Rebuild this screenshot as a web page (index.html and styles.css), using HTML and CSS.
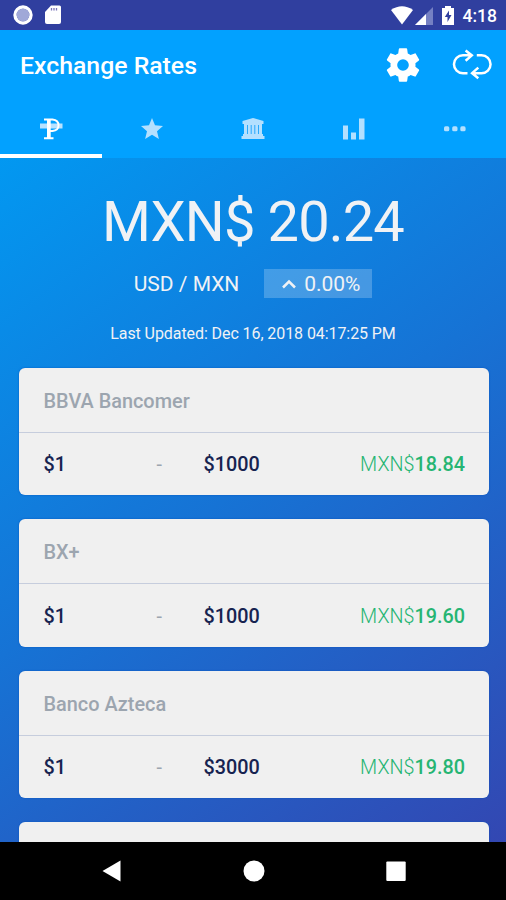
FILE: index.html
```html
<!DOCTYPE html>
<html lang="en">
<head>
<meta charset="utf-8">
<title>Exchange Rates</title>
<link rel="stylesheet" href="styles.css">
</head>
<body>
<div class="status">
  <svg class="status-sync" width="20" height="20" viewBox="0 0 20 20"><circle cx="10" cy="10" r="8" fill="none" stroke="#fff" stroke-width="3.400"/><circle cx="10" cy="10" r="6.400" fill="#a0a8d8"/></svg>
  <svg class="status-card" width="16" height="20" viewBox="0 0 16 20"><path d="M6 .5h8.500q1.500 0 1.500 1.500v15q0 2-2 2H2q-2 0-2-2V7z" fill="#fff"/><path d="M6.500 3v2.500M9 3v2.500M11.500 3v2.500" stroke="#7b75b8" stroke-width="1.300"/></svg>
  <span class="spacer"></span>
  <svg class="wifi" width="24" height="19" viewBox="0 0 24 19"><path d="M1 4Q12-3.500 23 4L12 18.500z" fill="#fff"/></svg>
  <svg class="signal" width="18" height="18" viewBox="0 0 18 18"><path d="M18 0v18H0z" fill="#7580c3"/><path d="M11 7v11H0z" fill="#fff"/></svg>
  <svg class="battery" width="12" height="19" viewBox="0 0 12 19"><path d="M3 0h6v2h3v17H0V2h3z" fill="#fff"/><path d="M7 4.500L2.800 11h2.700v5l4-7H7z" fill="#303f9f"/></svg>
  <span class="clock">4:18</span>
</div>
<header class="header">
  <div class="toolbar">
    <h1>Exchange Rates</h1>
    <svg class="gear" width="40" height="40" viewBox="0 0 24 24"><path fill="#fff" d="M19.430 12.980c.040-.320.070-.640.070-.980s-.030-.660-.070-.980l2.110-1.650c.190-.150.240-.420.120-.640l-2-3.460c-.120-.220-.390-.300-.610-.220l-2.490 1c-.520-.400-1.080-.730-1.690-.980l-.380-2.650C14.460 2.180 14.250 2 14 2h-4c-.250 0-.460.180-.490.420l-.380 2.650c-.610.250-1.170.590-1.690.980l-2.490-1c-.230-.090-.490 0-.610.220l-2 3.460c-.130.220-.070.490.120.640l2.110 1.650c-.040.320-.070.650-.070.980s.030.660.070.980l-2.110 1.650c-.190.150-.240.420-.120.640l2 3.460c.120.220.390.300.610.220l2.490-1c.520.400 1.080.730 1.690.980l.380 2.650c.030.240.240.420.490.420h4c.250 0 .460-.180.490-.420l.380-2.650c.610-.250 1.170-.590 1.690-.980l2.490 1c.230.090.490 0 .610-.220l2-3.460c.120-.220.070-.490-.120-.640zM12 15.500A3.500 3.500 0 1 1 12 8.500a3.500 3.500 0 0 1 0 7z"/></svg>
    <svg class="swap" width="40" height="32" viewBox="0 0 40 32" fill="none" stroke="#fff" stroke-width="2.500"><path d="M15.500 24.300H11a9 9 0 0 1 0-18.100h9.500M13.600 1.500l6.200 4.900-6.200 5.300M24.800 6.200h4.700a9 9 0 0 1 0 18.100H20M26.300 18.600l-6.200 5.500 6.200 5.200"/></svg>
  </div>
  <nav class="tabs">
    <span class="tab active"><svg width="26" height="26" viewBox="0 0 26 26"><path d="M2 7.500h22.500v5H2z" fill="#b8e2ff"/><path d="M6 3.500h8.500q6 .5 6 5.800t-6 5.700h-2.500M6 22.300h9.500" fill="none" stroke="#fff" stroke-width="1.900"/><path d="M9 3.500h3.700v19H9z" fill="#fff"/></svg></span>
    <span class="tab"><svg width="26" height="26" viewBox="0 0 26 26"><path d="M13 2l3 7.300 8 .7-6 5.200 1.900 7.800-6.900-4.200L6.100 23 8 15.200 2 10l8-.7z" fill="#b3e0ff"/></svg></span>
    <span class="tab"><svg width="26" height="26" viewBox="0 0 26 26" fill="#b3e0ff"><path d="M13 2L2.500 5v3h21V5zM4 8h18v10H4zM3 18h20v2H3zM1.500 20h23v3h-23z"/><path d="M7.500 9v9M11.200 9v9M14.800 9v9M18.500 9v9" stroke="#2aa9fc" stroke-width="1"/></svg></span>
    <span class="tab"><svg width="26" height="26" viewBox="0 0 26 26"><path d="M2 9.500h5v14H2zM10 16.500h5v7h-5zM18 2.500h5.500v21H18z" fill="#b3e0ff"/></svg></span>
    <span class="tab"><svg width="26" height="26" viewBox="0 0 26 26" fill="#b3e0ff"><rect x="2" y="10.300" width="5.300" height="5" rx="1.600"/><rect x="10.200" y="10.300" width="5.300" height="5" rx="1.600"/><rect x="18.300" y="10.300" width="5.300" height="5" rx="1.600"/></svg></span>
  </nav>
</header>
<main class="content">
  <div class="rate">MXN$ 20.24</div>
  <div class="pair"><span class="pair-name">USD / MXN</span><span class="change"><svg width="16" height="12" viewBox="0 0 16 12"><path d="M2 9.500l6-6 6 6" fill="none" stroke="#f0f2f5" stroke-width="2.500"/></svg>0.00%</span></div>
  <div class="updated">Last Updated: Dec 16, 2018 04:17:25 PM</div>
  <section class="cards">
    <article class="card"><h2>BBVA Bancomer</h2><div class="row"><b>$1</b><i>-</i><b>$1000</b><span class="price">MXN$<strong>18.84</strong></span></div></article>
    <article class="card"><h2>BX+</h2><div class="row"><b>$1</b><i>-</i><b>$1000</b><span class="price">MXN$<strong>19.60</strong></span></div></article>
    <article class="card"><h2>Banco Azteca</h2><div class="row"><b>$1</b><i>-</i><b>$3000</b><span class="price">MXN$<strong>19.80</strong></span></div></article>
    <article class="card"><h2></h2></article>
  </section>
</main>
<footer class="navbar">
  <svg width="22" height="22" viewBox="0 0 22 22"><path d="M1.500 11L19.500.5v21z" fill="#fff"/></svg>
  <svg width="22" height="22" viewBox="0 0 22 22"><circle cx="11" cy="11" r="10.500" fill="#fff"/></svg>
  <svg width="22" height="22" viewBox="0 0 22 22"><rect x="1.300" y="1.500" width="19.400" height="19.500" rx="1" fill="#fff"/></svg>
</footer>
</body>
</html>
```
FILE: styles.css
```css
* { box-sizing: border-box; }
body {
  margin: 0;
  height: 900px;
  display: flex;
  flex-direction: column;
  overflow: hidden;
  font-family: Roboto, "Liberation Sans", sans-serif;
  background: #000;
}
svg { display: block; flex: none; }
.status {
  flex: none;
  height: 30px;
  display: flex;
  align-items: center;
  padding: 0 9px 0 13px;
  background: #303f9f;
  color: #fff;
}
.status-card { margin-left: 12px; }
.spacer { flex: 1; }
.signal { margin: 2px 9px 0 1px; }
.clock { margin: 2px 0 0 9px; font-size: 17.500px; font-weight: 500; line-height: 20px; }
.header {
  flex: none;
  height: 128px;
  background: #02a1ff;
}
.toolbar {
  height: 70px;
  display: flex;
  align-items: center;
  padding: 0 14.500px 0 20px;
}
h1 {
  flex: 1;
  margin: 2px 0 0;
  color: #fff;
  font-size: 24.800px;
  font-weight: 500;
  line-height: 30px;
}
.gear { margin-top: -1px; }
.swap { margin-left: 29px; }
.tabs {
  height: 58px;
  display: grid;
  grid-template-columns: 102px repeat(4, 1fr);
}
.tab {
  display: flex;
  justify-content: center;
  padding: 16px 1px 0 0;
  border-bottom: 4px solid transparent;
}
.active { border-color: #fff; }
.content {
  flex: none;
  height: 684px;
  overflow: hidden;
  background: linear-gradient(145deg, #0298f1 0%, #1673d5 48%, #3347b2 100%);
  color: #f0f2f5;
}
.rate {
  margin-top: 30px;
  text-align: center;
  font-size: 56px;
  letter-spacing: -.850px;
  line-height: 68px;
  white-space: nowrap;
}
.pair {
  display: flex;
  justify-content: center;
  align-items: center;
  gap: 25px;
  margin-top: 12px;
  height: 30px;
  font-size: 21px;
}
.pair-name { padding-top: 1px; }
.change {
  display: flex;
  align-items: center;
  justify-content: center;
  gap: 7px;
  width: 108px;
  height: 29px;
  padding: 1px 0 0 5px;
  background: rgba(255, 255, 255, .22);
}
.updated {
  margin-top: 26px;
  text-align: center;
  font-size: 16px;
  letter-spacing: -.080px;
  line-height: 20px;
}
.cards {
  display: grid;
  gap: 24px;
  padding: 23.500px 17px 0 18.500px;
}
.card {
  height: 127.500px;
  border-radius: 6px;
  background: #f0f0f0;
  box-shadow: 0 0 2px #0755bd;
}
.card h2 {
  height: 65px;
  margin: 0;
  padding: 0 25px;
  border-bottom: 1px solid #c6cddd;
  color: #9ca5af;
  font-size: 19.900px;
  font-weight: 500;
  line-height: 67px;
}
.row {
  display: grid;
  grid-template-columns: 113px 47px 1fr auto;
  align-items: center;
  height: 62px;
  padding: 2px 24px 0 25px;
  font-size: 19.800px;
}
.row b { color: #172350; font-weight: 500; }
.row i { color: #9ca5af; font-style: normal; }
.price { color: #26b573; font-weight: 300; }
.price strong { font-weight: 500; }
.navbar {
  flex: 1;
  display: flex;
  align-items: center;
  justify-content: center;
  gap: 120px;
  padding-left: 1px;
}
```
